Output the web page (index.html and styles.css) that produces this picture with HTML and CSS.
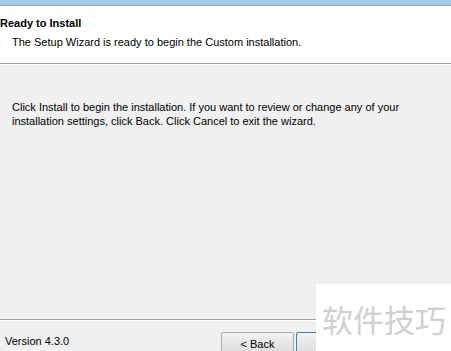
FILE: index.html
```html
<!DOCTYPE html>
<html lang="en">
<head>
  <meta charset="UTF-8" />
  <title>Setup Wizard - Ready to Install</title>
  <link rel="stylesheet" href="styles.css">
</head>
<body>
  <div class="window">
    <!-- Title bar edge -->
    <div class="titlebar"></div>

    <!-- Header -->
    <div class="header">
      <h1>Ready to Install</h1>
      <p>The Setup Wizard is ready to begin the Custom installation.</p>
    </div>

    <!-- Main text -->
    <div class="content">
      <p>Click Install to begin the installation. If you want to review or change any of your installation settings, click Back. Click Cancel to exit the wizard.</p>
    </div>

    <!-- Footer -->
    <div class="footer">
      <span class="version">Version 4.3.0</span>
      <div class="buttons">
        <button class="btn">&lt; Back</button>
        <button class="btn default">Install</button>
        <button class="btn cancel">Cancel</button>
      </div>
    </div>

    <div class="watermark">软件技巧</div>
  </div>
</body>
</html>
```

FILE: styles.css
```css
body {
  margin: 0;
  padding: 0;
  font-family: "Liberation Sans", Arial, sans-serif;
  font-size: 11px;
  color: #000;
}

.window {
  position: relative;
  width: 451px;
  height: 351px;
  display: flex;
  flex-direction: column;
  background: #f0f0f0;
  overflow: hidden;
}

.titlebar {
  height: 5px;
  background: #a8c9e6;
  border-bottom: 1px solid #98a8b8;
}

.header {
  height: 57px;
  background: #fff;
  border-bottom: 1px solid #a0a0a0;
  box-shadow: 0 1px 0 #fff;
}

.header h1 {
  margin: 0;
  padding: 11px 0 0 0;
  font-size: 11px;
  font-weight: bold;
}

.header p {
  margin: 7px 0 0 12px;
}

.content {
  flex: 1;
  padding: 36px 12px 0 12px;
}

.content p {
  margin: 0;
  line-height: 14px;
}

.footer {
  height: 31px;
  border-top: 1px solid #a0a0a0;
  box-shadow: inset 0 1px 0 #fff;
  display: flex;
  align-items: flex-start;
}

.version {
  margin: 15px 0 0 5px;
  flex: 1;
}

.buttons {
  display: flex;
  gap: 2px;
  padding-top: 12px;
}

.btn {
  width: 73px;
  height: 23px;
  font-family: inherit;
  font-size: 11px;
  background: linear-gradient(#f2f2f2, #dcdcdc);
  border: 1px solid #acacac;
  border-radius: 2px;
  padding: 0;
}

.btn.default {
  border-color: #3c7fb1;
}

.btn.cancel {
  margin-left: 6px;
  margin-right: 1px;
}

.watermark {
  position: absolute;
  left: 316px;
  top: 284px;
  width: 135px;
  height: 67px;
  background: #fff;
  color: #d0d0d0;
  font-family: "Noto Sans CJK SC", sans-serif;
  font-size: 31px;
  padding: 12px 0 0 6px;
  box-sizing: border-box;
}
```
